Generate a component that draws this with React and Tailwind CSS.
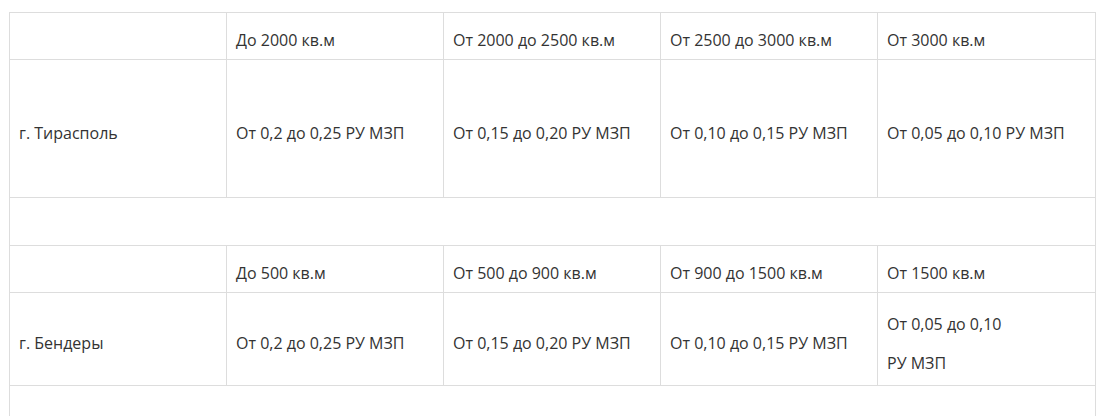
import React from "react";

const td = "border border-[#dddddd] px-[9px] pt-[8px] align-middle leading-6";

export default function App() {
  const rows1 = ["До 2000 кв.м", "От 2000 до 2500 кв.м", "От 2500 до 3000 кв.м", "От 3000 кв.м"];
  const vals1 = ["От 0,2 до 0,25 РУ МЗП", "От 0,15 до 0,20 РУ МЗП", "От 0,10 до 0,15 РУ МЗП", "От 0,05 до 0,10 РУ МЗП"];
  const rows2 = ["До 500 кв.м", "От 500 до 900 кв.м", "От 900 до 1500 кв.м", "От 1500 кв.м"];
  const vals2 = ["От 0,2 до 0,25 РУ МЗП", "От 0,15 до 0,20 РУ МЗП", "От 0,10 до 0,15 РУ МЗП"];
  return (
    <div
      className="w-[1096px] h-[416px] overflow-hidden bg-white pt-[12px] pl-[9px] text-[16px] text-[#333333]"
      style={{ fontFamily: '"Open Sans", sans-serif' }}
    >
      <table className="table-fixed border-collapse w-[1086px]">
        <colgroup>
          <col className="w-[217px]" />
          <col className="w-[217px]" />
          <col className="w-[217px]" />
          <col className="w-[217px]" />
          <col className="w-[218px]" />
        </colgroup>
        <tbody>
          <tr className="h-[47px]">
            <td className={td}></td>
            {rows1.map((t) => (
              <td key={t} className={td}>{t}</td>
            ))}
          </tr>
          <tr className="h-[138px]">
            <td className={td}>г. Тирасполь</td>
            {vals1.map((t) => (
              <td key={t} className={td}>{t}</td>
            ))}
          </tr>
          <tr className="h-[48px]">
            <td className={td} colSpan={5}></td>
          </tr>
          <tr className="h-[47px]">
            <td className={td}></td>
            {rows2.map((t) => (
              <td key={t} className={td}>{t}</td>
            ))}
          </tr>
          <tr className="h-[93px]">
            <td className={td}>г. Бендеры</td>
            {vals2.map((t) => (
              <td key={t} className={td}>{t}</td>
            ))}
            <td className={td}>
              <div className="flex flex-col gap-[15px]">
                <span>От 0,05 до 0,10</span>
                <span>РУ МЗП</span>
              </div>
            </td>
          </tr>
          <tr className="h-[48px]">
            <td className={td} colSpan={5}></td>
          </tr>
        </tbody>
      </table>
    </div>
  );
}
